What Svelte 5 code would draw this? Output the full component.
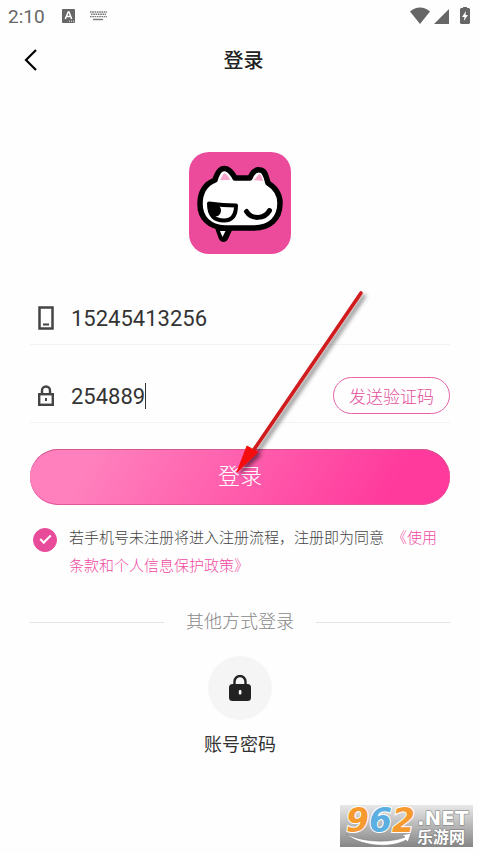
<script>
  let phone = $state('15245413256');
  let code = $state('254889');
  let agreed = $state(true);
</script>

<div class="page">
  <div class="status">
    <span class="time">2:10</span>
    <svg class="app" width="13" height="14" viewBox="0 0 13 14" aria-hidden="true">
      <rect width="13" height="14" rx="1" fill="#666" />
      <path d="M3.3 10 6.2 3h.8l2.7 7M4.4 7.6h4.2" fill="none" stroke="#fff" stroke-width="1.5" />
      <path d="M7 12.2h1m1 0h1m1 0h1" stroke="#fff" />
    </svg>
    <svg width="17" height="10" viewBox="0 0 17 10" aria-hidden="true">
      <g stroke="#777" stroke-width="1.4" stroke-dasharray="1.6 .7">
        <path d="M0 1h17M1 3.3h15M0 5.6h17" />
      </g>
      <path d="M3 8.5h10" stroke="#777" stroke-width="1.4" />
    </svg>
    <svg class="signals" width="61" height="18" viewBox="0 0 61 18" fill="#666" aria-hidden="true">
      <path d="M1 4.500C7-.8 15-.8 21 4.500L11 17z" />
      <path d="M40 2v15H25z" />
      <path fill-rule="evenodd" d="M52 1h2V0h4v1h2l1 1v14l-1 1h-8l-1-1V2zM57 4l-4 6h2.500l-.7 4L59 8h-2.500z" />
    </svg>
  </div>

  <header>
    <button class="back" aria-label="返回">
      <svg width="14" height="24" viewBox="0 0 14 24" aria-hidden="true">
        <path d="M12 2 2 12l10 10" fill="none" stroke="#000" stroke-width="2.200" />
      </svg>
    </button>
    <h1>登录</h1>
  </header>

  <main>
    <svg class="logo" width="102" height="102" viewBox="0 0 102 102" aria-hidden="true">
      <rect width="102" height="102" rx="20" fill="#ec4b9c" />
      <path d="M26 76l4 11c2 4 7 4 9 0l5-11z" fill="#000" />
      <path d="m31 79 2.500 6 3-6z" fill="#fff" />
      <path d="M26 28C29 18 33 15 38 17c4 2 6 5 8 9h15c2-5 5-9 10-8 5 0 6 6 8 13 8 5 12 12 12 20 0 16-10 25-27 25H36C20 75 11 66 11 52c0-12 5-20 15-24z" fill="#fff" stroke="#000" stroke-width="5.500" stroke-linejoin="round" />
      <path d="m31 28 4-7c3 1 5 4 6 7zM65 28l5-6c3 1 3 4 4 7z" fill="#f6a6cb" />
      <path d="M20 51.500q14 2 27 2c0 10-4 15-12 15-9 0-15-5-15-17z" fill="#fff" stroke="#000" stroke-width="4" stroke-linejoin="round" />
      <path d="M20 53h9c4 3 4 8 0 11-5 1-9-4-9-11z" fill="#000" />
      <path d="M57.500 59.500c5 8 18 8 23-1" fill="none" stroke="#000" stroke-width="5" stroke-linecap="round" />
    </svg>

    <form onsubmit={(e) => e.preventDefault()}>
      <div class="field">
        <label for="phone" aria-label="手机号">
          <svg width="16" height="24" viewBox="0 0 16 24" aria-hidden="true">
            <rect x="1.500" y="1.500" width="13" height="21" fill="none" stroke="#444" stroke-width="2.500" />
            <path d="M5 18.500h6" stroke="#444" stroke-width="2" />
          </svg>
        </label>
        <input id="phone" type="tel" bind:value={phone} />
      </div>
      <div class="field">
        <label for="code" aria-label="验证码">
          <svg width="16" height="22" viewBox="0 0 16 22" aria-hidden="true">
            <rect x="1.200" y="9.200" width="13.600" height="10.600" fill="none" stroke="#444" stroke-width="2.400" />
            <path d="M4 9V5.500a4 4 0 0 1 8 0V9" fill="none" stroke="#444" stroke-width="2.400" />
            <path d="M7 13h2v3H7z" fill="#444" />
          </svg>
        </label>
        <input id="code" class="fit" type="text" inputmode="numeric" bind:value={code} />
        <span class="caret"></span>
        <button type="button" class="send">发送验证码</button>
      </div>
      <button class="submit">登录</button>
      <div class="terms">
        <input id="agree" type="checkbox" bind:checked={agreed} />
        <p><label for="agree">若手机号未注册将进入注册流程，注册即为同意</label><a href="#terms">《使用条款和个人信息保护政策》</a></p>
      </div>
    </form>

    <div class="divider"><span>其他方式登录</span></div>
    <button class="other">
      <span class="disc">
        <svg width="22" height="26" viewBox="0 0 22 26" aria-hidden="true">
          <path d="M5.500 10V6.500a5.500 5.500 0 0 1 11 0V10" fill="none" stroke="#222" stroke-width="2.400" />
          <rect y="9" width="22" height="17" rx="3.500" fill="#222" />
          <rect x="9.800" y="15" width="2.600" height="4.500" rx="1" fill="#fff" />
        </svg>
      </span>
      账号密码
    </button>
  </main>

  <svg class="arrow" width="140" height="190" viewBox="0 0 140 190" aria-hidden="true">
    <defs>
      <filter id="shade" x="-20%" y="-20%" width="140%" height="140%">
        <feDropShadow dx="3" dy="3" stdDeviation="2" flood-color="#000" flood-opacity=".5" />
      </filter>
    </defs>
    <g filter="url(#shade)">
      <path d="M130 3 22 161" stroke="#d01a1e" stroke-width="3.600" stroke-linecap="round" />
      <path d="M6 182 16 156l5 3 6 3z" fill="#f50d0d" stroke="#f50d0d" />
    </g>
  </svg>

  <svg class="mark" width="133" height="42" viewBox="0 0 133 42">
    <defs>
      <linearGradient id="metal" x2="0" y2="1">
        <stop stop-color="#e8e8e8" />
        <stop offset="1" stop-color="#868686" />
      </linearGradient>
    </defs>
    <rect width="133" height="42" fill="url(#metal)" />
    <path d="M6 29c19 9 45 9 59 3l-3-2 9-2-3 9-2-2C50 44 20 41 6 29z" fill="#fff" stroke="#777" stroke-width=".5" />
    <text class="digits" x="6" y="27"><tspan fill="#f79a2e">9</tspan><tspan fill="#5aaee0">6</tspan><tspan fill="#f79a2e">2</tspan></text>
    <text class="net" x="77" y="20">.NET</text>
    <text class="cn" x="77" y="38">乐游网</text>
  </svg>
</div>

<style>
  :global(body) {
    margin: 0;
    background: #fff;
  }
  .page {
    position: relative;
    box-sizing: border-box;
    min-height: 100vh;
    overflow: hidden;
    background: #fefefe;
    color: #333;
    font-family: Roboto, 'Noto Sans CJK SC', sans-serif;
  }
  button,
  input {
    padding: 0;
    border: 0;
    background: none;
    color: inherit;
    font: inherit;
  }
  button {
    cursor: pointer;
  }
  svg {
    display: block;
    flex: none;
  }
  .status {
    display: flex;
    align-items: center;
    height: 32px;
    padding: 0 9px 0 8px;
    color: #666;
  }
  .time {
    font-size: 19px;
  }
  .app {
    margin: 0 15px 0 17px;
  }
  .signals {
    margin-left: auto;
  }
  header {
    display: grid;
    grid-template-columns: 48px 1fr 40px;
    align-items: center;
    height: 56px;
    padding: 0 8px;
  }
  .back {
    display: flex;
    align-items: center;
    height: 48px;
    padding-left: 16px;
  }
  h1 {
    margin: 0;
    padding-top: 2px;
    color: #222;
    font-size: 20px;
    font-weight: 500;
    line-height: 28px;
    text-align: center;
  }
  main {
    padding: 64px 29px 0 30px;
  }
  .logo {
    margin: 0 auto;
  }
  form {
    padding-top: 37px;
  }
  .field {
    display: flex;
    align-items: center;
    height: 53px;
    margin-bottom: 24px;
    border-bottom: 1px solid #f3f3f3;
    font-size: 22px;
  }
  .field label {
    width: 33px;
    padding-left: 8px;
    flex: none;
  }
  .field input {
    flex: 1;
    min-width: 0;
    padding-top: 2px;
    outline: none;
  }
  .field .fit {
    flex: none;
    field-sizing: content;
    min-width: 12px;
    max-width: 50%;
  }
  .caret {
    width: 1px;
    height: 26px;
    background: #333;
  }
  .send {
    height: 37px;
    margin-left: auto;
    padding: 0 15px;
    border: 1px solid #e763a8;
    border-radius: 19px;
    color: #e44d9c;
    font-size: 17px;
    font-weight: 300;
  }
  .submit {
    display: block;
    width: 100%;
    height: 56px;
    margin-top: 26px;
    border-radius: 28px;
    background: linear-gradient(120deg, #ff80bd 15%, #ff3a9c 85%);
    box-shadow: inset 0 1px #d0588f, inset 0 -1px #e8559c;
    color: #fff;
    font-size: 22px;
    font-weight: 300;
    line-height: 54px;
  }
  .terms {
    display: flex;
    gap: 12px;
    padding: 19px 8px 0 3px;
    font-size: 15px;
    font-weight: 300;
    line-height: 28px;
  }
  .terms input {
    appearance: none;
    flex: none;
    display: grid;
    place-items: center;
    width: 24px;
    height: 24px;
    margin: 4px 0 0;
    border: 1px solid #e94b9b;
    border-radius: 50%;
  }
  .terms input:checked {
    background: #e94b9b;
  }
  .terms input:checked::after {
    content: '';
    width: 9px;
    height: 4px;
    margin-bottom: 4px;
    border: solid #fff;
    border-width: 0 0 2px 2px;
    transform: rotate(-45deg);
  }
  .terms p {
    margin: 0;
    color: #444;
  }
  .terms a {
    margin-left: 8px;
    color: #f04aa2;
    text-decoration: none;
  }
  .divider {
    display: flex;
    align-items: center;
    gap: 22px;
    margin-top: 28px;
    color: #888;
    font-size: 18px;
    font-weight: 300;
    line-height: 28px;
  }
  .divider::before,
  .divider::after {
    content: '';
    flex: 1;
    height: 1px;
    background: #e4e4e4;
  }
  .other {
    display: flex;
    flex-direction: column;
    align-items: center;
    gap: 11px;
    margin: 20px auto 0;
    font-size: 18px;
    line-height: 28px;
  }
  .disc {
    display: grid;
    place-items: center;
    width: 64px;
    height: 64px;
    border-radius: 50%;
    background: #f5f5f5;
  }
  .arrow {
    position: absolute;
    top: 290px;
    left: calc(50% - 9px);
    pointer-events: none;
  }
  .mark {
    position: absolute;
    right: 6px;
    bottom: 6px;
    overflow: visible;
  }
  .digits {
    font: italic bold 33px 'DejaVu Sans', sans-serif;
    stroke: #fff;
    stroke-width: 2px;
    paint-order: stroke;
  }
  .net,
  .cn {
    fill: #fff;
    stroke: #777;
    stroke-width: 1px;
    paint-order: stroke;
  }
  .net {
    font: bold 20px 'DejaVu Sans', sans-serif;
  }
  .cn {
    font: bold 16px 'Noto Sans CJK SC', sans-serif;
  }
</style>
